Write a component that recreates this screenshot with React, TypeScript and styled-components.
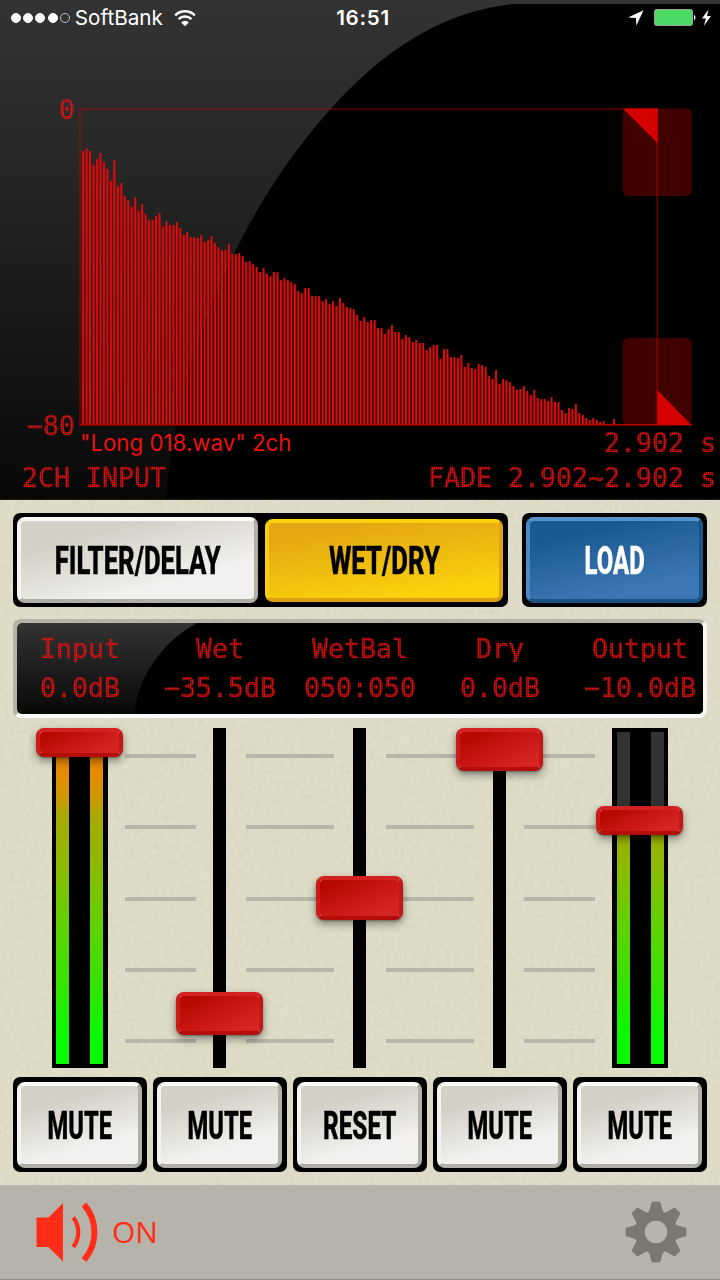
import React from "react";
import styled, { createGlobalStyle, css } from "styled-components";

const GlobalStyle = createGlobalStyle`
  * { box-sizing: border-box; }
  html, body { margin: 0; padding: 0; background: #000; }
  body { font-family: Inter, "Liberation Sans", sans-serif; }
`;

const Screen = styled.main`
  width: 720px;
  height: 1280px;
  display: flex;
  flex-direction: column;
  overflow: hidden;
`;

/* ---------- LED text ---------- */

const Led = styled.span`
  display: block;
  font-family: "DejaVu Sans Mono", "Liberation Mono", monospace;
  font-size: 26.58px;
  line-height: 27px;
  height: 27px;
  white-space: pre;
  color: #e81214;
  -webkit-text-stroke: 0.6px #e81214;
  -webkit-mask-image: repeating-linear-gradient(0deg, #000 0 1px, rgba(0, 0, 0, 0.74) 1px 2px),
    repeating-linear-gradient(90deg, #000 0 1px, rgba(0, 0, 0, 0.66) 1px 2px);
  -webkit-mask-composite: source-in;
  mask-composite: intersect;
`;

/* ---------- Upper display ---------- */

const Display = styled.section`
  position: relative;
  height: 500px;
  background: linear-gradient(#333 0, #282828 30%, #181818 65%, #080808 100%);
  border-bottom: 1px solid #1c1b18;
  display: flex;
  flex-direction: column;
`;

const Gloss = styled.svg`
  position: absolute;
  inset: 0;
`;

const StatusBar = styled.header`
  position: relative;
  height: 36px;
  padding: 0 8px 0 11px;
  display: grid;
  grid-template-columns: 1fr auto 1fr;
  align-items: center;
  color: #fff;
`;

const StatusGroup = styled.div<{ $end?: boolean }>`
  display: flex;
  align-items: center;
  justify-content: ${(p) => (p.$end ? "flex-end" : "flex-start")};
`;

const Signal = styled.div`
  display: flex;
  gap: 2.2px;
  margin-right: 5px;
`;

const SignalDot = styled.i<{ $on: boolean }>`
  width: 10px;
  height: 10px;
  border-radius: 50%;
  border: 1px solid ${(p) => (p.$on ? "#fff" : "#bbb")};
  background: ${(p) => (p.$on ? "#fff" : "transparent")};
`;

const Carrier = styled.span`
  font-size: 20.7px;
  line-height: 36px;
  margin-right: 11px;
`;

const Clock = styled.time`
  margin-left: 3px;
  font-size: 20.6px;
  font-weight: 600;
  line-height: 36px;
  letter-spacing: 0.7px;
`;

const ChartRow = styled.div`
  position: relative;
  display: flex;
  height: 333px;
  margin-top: 60px;
`;

const Axis = styled.div`
  width: 75px;
  height: 343px;
  flex: none;
  display: flex;
  flex-direction: column;
  justify-content: space-between;
  align-items: flex-end;
`;

const Chart = styled.svg`
  flex: none;
  display: block;
  margin-left: 4px;
`;

const InfoRow = styled.div`
  position: relative;
  display: flex;
  justify-content: space-between;
  height: 35px;
  padding: 0 4px 0 22px;
`;

const FileName = styled.span`
  margin-left: 58px;
  font-size: 22.3px;
  line-height: 28px;
  color: #ec1010;
  white-space: nowrap;
`;

/* ---------- Cream panel ---------- */

const Panel = styled.section`
  position: relative;
  height: 685px;
  background: #dfddc9;
  padding: 13px 13px 0;
`;

const Grain = styled.svg`
  position: absolute;
  inset: 0;
  opacity: 0.13;
`;

const Modes = styled.div`
  position: relative;
  display: flex;
  justify-content: space-between;
  height: 94px;
`;

const Frame = styled.div<{ $w: number; $h?: number }>`
  width: ${(p) => p.$w}px;
  height: ${(p) => p.$h ?? 94}px;
  flex: none;
  display: flex;
  justify-content: space-between;
  align-items: center;
  padding: ${(p) => (p.$h ? 5 : 4)}px 5px 4px 4px;
  border-radius: 7px;
  background: #000;
`;

type Tone = "ivory" | "gold" | "blue";

const tones = {
  ivory: css`
    color: #000;
    background: linear-gradient(165deg, #d3d0c5 22%, #e2e0d9 48%, #f2f1ef 72%);
    border-color: #fbfbfa #b3b0a8 #b0aea6 #f4f3f0;
  `,
  gold: css`
    color: #000;
    background: linear-gradient(172deg, #e5a812 15%, #efbc10 50%, #f9d20c 85%);
    border-color: #fdd010 #dfa414 #dca012 #f8cd14;
  `,
  blue: css`
    color: #fff;
    background: linear-gradient(168deg, #1b5a90 20%, #2c69a3 50%, #3b77b5 80%);
    border-color: #5594cb #185488 #185283 #4b8ac2;
  `,
};

const Key = styled.button<{ $tone: Tone; $h: number; $w: number }>`
  width: ${(p) => p.$w}px;
  height: ${(p) => p.$h}px;
  flex: none;
  display: flex;
  align-items: center;
  justify-content: center;
  padding: 2px 0 0;
  border: 4.5px solid;
  border-radius: 8px;
  ${(p) => tones[p.$tone]}
`;

const KeyText = styled.span<{ $squeeze: number }>`
  display: block;
  font-family: Roboto, sans-serif;
  font-weight: 800;
  font-size: 39.5px;
  line-height: 40px;
  white-space: nowrap;
  margin: 0 -60px;
  -webkit-text-stroke: 0.4px currentColor;
  transform: scaleX(${(p) => p.$squeeze});
`;

const Readout = styled.div`
  position: relative;
  margin-top: 12px;
  height: 99px;
  border: 4px solid;
  border-color: #b5b3a9 #f6f5f1 #fcfcfa #b5b3a9;
  border-radius: 8px;
`;

const ReadoutGlass = styled.div`
  position: relative;
  height: 91px;
  overflow: hidden;
  border-radius: 5px;
  background: linear-gradient(#333, #080808);
`;

const ReadoutCells = styled.div`
  position: relative;
  display: grid;
  grid-template-columns: repeat(5, 140px);
  margin-left: -7px;
  padding-top: 12px;
`;

const Cell = styled.div`
  display: flex;
  flex-direction: column;
  align-items: center;
  gap: 12px;
`;

/* ---------- Faders ---------- */

const FaderBank = styled.div`
  position: relative;
  display: grid;
  height: 340px;
  margin: 10px -13px 0;
`;

const TickLayer = styled.div`
  grid-area: 1 / 1;
  display: flex;
  padding: 26px 0 25px 125px;
`;

const Ticks = styled.div<{ $w: number; $gap: number }>`
  width: ${(p) => p.$w}px;
  margin-right: ${(p) => p.$gap}px;
  display: flex;
  flex-direction: column;
  justify-content: space-between;
`;

const Tick = styled.i`
  height: 4px;
  background: #b8b6ab;
`;

const FaderLayer = styled.div`
  grid-area: 1 / 1;
  display: grid;
  grid-template-columns: repeat(5, 140px);
  margin-left: 10px;
`;

const Fader = styled.div`
  position: relative;
  display: flex;
  justify-content: center;
`;

const Slot = styled.div`
  width: 13px;
  height: 340px;
  margin-right: 1px;
  background: #000;
`;

const Meter = styled.div<{ $inset: number }>`
  width: 56px;
  height: 340px;
  padding: 4px ${(p) => 9 - p.$inset}px 4px ${(p) => p.$inset}px;
  display: flex;
  justify-content: space-between;
  background: #000;
`;

const Level = styled.div<{ $off: number }>`
  width: 13px;
  background: linear-gradient(#333 0 ${(p) => p.$off}px, transparent ${(p) => p.$off}px),
    linear-gradient(#ec8200 5%, #e48c00 13%, #cc9800 20%, #a8a800 25%, #88bc00 42%, #5cd400 60%, #38e200 75%, #08fa00 92%);
`;

const Knob = styled.div<{ $top: number; $h: number }>`
  position: absolute;
  left: 26.4px;
  top: ${(p) => p.$top}px;
  width: 87px;
  height: ${(p) => p.$h}px;
  border: 4.5px solid;
  border-color: #d32020 #c41814 #b40e0a #cb1b18;
  border-radius: 8px;
  background: linear-gradient(155deg, #b70900 15%, #c91613 50%, #d62422 85%) padding-box;
  background-color: #c41512;
  box-shadow: 0 4px 9px rgba(0, 0, 0, 0.42), 0 1px 2px rgba(0, 0, 0, 0.25);
`;

const Mutes = styled.div`
  position: relative;
  display: flex;
  justify-content: space-between;
  margin-top: 9px;
`;

/* ---------- Footer ---------- */

const Footer = styled.footer`
  height: 95px;
  display: flex;
  align-items: center;
  justify-content: space-between;
  padding: 0 33px 0 36px;
  background: #b6b3ab;
  border-bottom: 1px solid #92908a;
`;

const Sound = styled.div`
  display: flex;
  align-items: center;
  gap: 14px;
  color: #ff2d17;
`;

const SoundLabel = styled.span`
  font-family: "Open Sans", sans-serif;
  font-size: 30px;
  line-height: 40px;
`;

const decay = [
  151, 148, 151, 165, 159, 153, 162, 169, 181, 160, 186, 183, 196, 200, 207, 197, 211, 204, 214, 220, 220, 216,
  213, 227, 221, 225, 225, 222, 228, 235, 232, 237, 237, 238, 235, 242, 240, 236, 243, 247, 250, 250, 244, 254,
  254, 253, 256, 262, 261, 264, 267, 272, 268, 274, 276, 272, 272, 280, 278, 280, 282, 284, 291, 293, 288, 288,
  296, 296, 296, 301, 299, 304, 301, 306, 298, 303, 307, 308, 309, 315, 321, 317, 322, 320, 320, 328, 328, 334,
  329, 325, 332, 332, 339, 335, 337, 342, 340, 343, 343, 350, 347, 345, 345, 359, 349, 349, 357, 357, 358, 355,
  367, 363, 368, 369, 364, 365, 367, 376, 379, 370, 384, 379, 380, 382, 386, 390, 389, 386, 391, 395, 390, 398,
  399, 399, 401, 397, 402, 402, 410, 413, 408, 409, 404, 413, 415, 418, 420, 418, 420, 422, 421, 424, 424.5, 419,
];

const decayLine = decay.map((y, i) => `${(83 + i * 3.47).toFixed(1)} ${y + 2}`).join("L");

const readings = [
  ["Input", "0.0dB"],
  ["Wet", "−35.5dB"],
  ["WetBal", "050:050"],
  ["Dry", "0.0dB"],
  ["Output", "−10.0dB"],
];

const faders = [
  { meter: true, inset: 4, off: 0, top: 0, h: 29 },
  { meter: false, inset: 0, off: 0, top: 264, h: 43 },
  { meter: false, inset: 0, off: 0, top: 148, h: 44 },
  { meter: false, inset: 0, off: 0, top: 0, h: 43 },
  { meter: true, inset: 5, off: 90, top: 78, h: 29 },
];

const tickColumns = [
  [71, 50],
  [88, 52],
  [88, 50],
  [71, 0],
];

const gearTeeth = [0, 45, 90, 135, 180, 225, 270, 315];

export default function App() {
  return (
    <Screen>
      <GlobalStyle />
      <Display>
        <Gloss width="720" height="499" viewBox="0 0 720 499">
          <path d="M720 4H513C460 10 410 33 360 79C310 126 268 185 236 250C198 327 175 400 166 500H720Z" fill="#000" />
        </Gloss>
        <StatusBar>
          <StatusGroup>
            <Signal>
              {[true, true, true, true, false].map((on, i) => (
                <SignalDot key={i} $on={on} />
              ))}
            </Signal>
            <Carrier>SoftBank</Carrier>
            <svg width="22" height="17" viewBox="0 0 22 17" fill="none" stroke="#fff" strokeWidth="2.5">
              <path d="M1.2 5.4a13.8 13.8 0 0 1 19.6 0" />
              <path d="M4.6 9.2a9 9 0 0 1 12.8 0" />
              <path d="M11 16.2l-3.8-3.8a5.4 5.4 0 0 1 7.6 0z" fill="#fff" stroke="none" />
            </svg>
          </StatusGroup>
          <Clock>16:51</Clock>
          <StatusGroup $end>
            <svg width="84" height="20" viewBox="0 0 84 20">
              <path d="M15.5 2.2L0 9.6l8 .4 0.3 7.7z" fill="#fff" />
              <rect x="26.5" y="1.5" width="38" height="16" rx="2" fill="#4cd964" stroke="#9aa89c" />
              <path d="M66 6.5q3 3 0 6z" fill="#fff" />
              <path d="M80.5 1.5L74 10.5h4l-2.2 7.5 7.2-10h-4z" fill="#fff" />
            </svg>
          </StatusGroup>
        </StatusBar>
        <ChartRow>
          <Axis>
            <Led>0</Led>
            <Led>−80</Led>
          </Axis>
          <Chart width="641" height="333" viewBox="79 96 641 333">
            <rect x="622.5" y="108.5" width="69.5" height="87.5" rx="6" fill="#400000" />
            <rect x="622.5" y="338" width="69.5" height="87" rx="6" fill="#400000" />
            <path d={`M81 424.5V151L${decayLine}V424.5Z`} fill="#e00000" opacity="0.26" />
            {decay.map((y, i) => (
              <rect key={i} x={82.2 + i * 3.47} y={y} width="1.9" height={424.5 - y} fill="#d80e0e" />
            ))}
            <path d="M80 424V109H657" fill="none" stroke="#e00000" strokeOpacity="0.42" strokeWidth="1.5" />
            <path d="M657.3 109V425" stroke="#c00000" strokeOpacity="0.5" strokeWidth="1.7" />
            <path d="M79.5 424.7H692" stroke="#b80000" strokeWidth="1.6" />
            <path d="M623 108.5H657.8V143.5Z" fill="#d40000" />
            <path d="M657.3 390V425H691.5Z" fill="#d40000" />
          </Chart>
        </ChartRow>
        <InfoRow>
          <FileName>"Long 018.wav" 2ch</FileName>
          <Led>2.902 s</Led>
        </InfoRow>
        <InfoRow>
          <Led>2CH INPUT</Led>
          <Led>FADE 2.902~2.902 s</Led>
        </InfoRow>
      </Display>

      <Panel>
        <Grain width="720" height="685">
          <filter id="grain" x="0" y="0" width="100%" height="100%" colorInterpolationFilters="sRGB">
            <feTurbulence type="fractalNoise" baseFrequency="0.2" numOctaves="2" seed="4" />
            <feColorMatrix values="0 0 0 0 0.74  0 0 0 0 0.72  0 0 0 0 0.58  3 0 0 0 -1.25" />
          </filter>
          <rect width="720" height="685" filter="url(#grain)" />
        </Grain>
        <Modes>
          <Frame $w={495}>
            <Key $tone="ivory" $w={241} $h={86}>
              <KeyText $squeeze={0.65}>FILTER/DELAY</KeyText>
            </Key>
            <Key $tone="gold" $w={238} $h={83}>
              <KeyText $squeeze={0.65}>WET/DRY</KeyText>
            </Key>
          </Frame>
          <Frame $w={185}>
            <Key $tone="blue" $w={177} $h={86}>
              <KeyText $squeeze={0.605}>LOAD</KeyText>
            </Key>
          </Frame>
        </Modes>
        <Readout>
          <ReadoutGlass>
            <Gloss width="686" height="91">
              <path d="M180 0C143 20 119 58 118 91H686V0Z" fill="#000" />
            </Gloss>
            <ReadoutCells>
              {readings.map(([name, value]) => (
                <Cell key={name}>
                  <Led>{name}</Led>
                  <Led>{value}</Led>
                </Cell>
              ))}
            </ReadoutCells>
          </ReadoutGlass>
        </Readout>
        <FaderBank>
          <TickLayer>
            {tickColumns.map(([w, gap], i) => (
              <Ticks key={i} $w={w} $gap={gap}>
                {[0, 1, 2, 3, 4].map((n) => (
                  <Tick key={n} />
                ))}
              </Ticks>
            ))}
          </TickLayer>
          <FaderLayer>
            {faders.map((f, i) => (
              <Fader key={i}>
                {f.meter ? (
                  <Meter $inset={f.inset}>
                    <Level $off={f.off} />
                    <Level $off={f.off} />
                  </Meter>
                ) : (
                  <Slot />
                )}
                <Knob $top={f.top} $h={f.h} />
              </Fader>
            ))}
          </FaderLayer>
        </FaderBank>
        <Mutes>
          {["MUTE", "MUTE", "RESET", "MUTE", "MUTE"].map((label, i) => (
            <Frame key={i} $w={134} $h={95}>
              <Key $tone="ivory" $w={125} $h={86}>
                <KeyText $squeeze={label === "RESET" ? 0.615 : 0.6}>{label}</KeyText>
              </Key>
            </Frame>
          ))}
        </Mutes>
      </Panel>

      <Footer>
        <Sound>
          <svg width="62" height="60" viewBox="0 0 62 60">
            <path d="M.5 15.5H12.5L27 1V59.5L12.5 45H.5Z" fill="currentColor" />
            <path d="M37.2 15.5a24 24 0 0 1 0 29.5" fill="none" stroke="currentColor" strokeWidth="4.2" />
            <path d="M48 2.5a42 42 0 0 1 0 55.5" fill="none" stroke="currentColor" strokeWidth="6" />
          </svg>
          <SoundLabel>ON</SoundLabel>
        </Sound>
        <svg width="62" height="62" viewBox="-31 -31 62 62" fill="#7b7870">
          {gearTeeth.map((a) => (
            <path key={a} d="M-9.5 -18Q-6.5 -20 -5 -28L-3.8 -30.5H3.8L5 -28Q6.5 -20 9.5 -18Z" transform={`rotate(${a})`} />
          ))}
          <circle r="16" fill="none" stroke="#7b7870" strokeWidth="9.5" />
        </svg>
      </Footer>
    </Screen>
  );
}
